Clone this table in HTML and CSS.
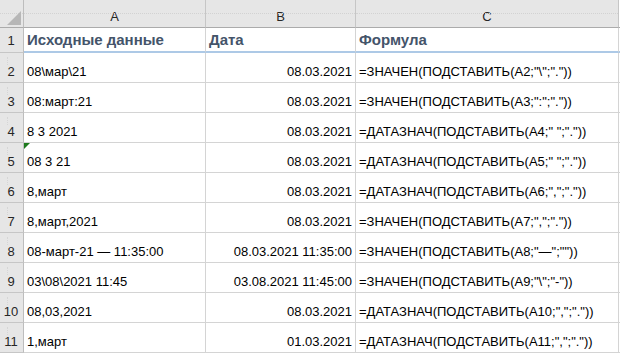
FILE: index.html
```html
<!DOCTYPE html>
<html lang="ru">
<head>
<meta charset="utf-8">
<link rel="stylesheet" href="styles.css">
</head>
<body>
<div class="sheet">
  <div class="ch corner"><span class="tri"></span></div>
  <div class="ch">A</div>
  <div class="ch">B</div>
  <div class="ch">C</div>
  <div class="blank"></div>

  <div class="rh r1">1</div>
  <div class="c r1 head">Исходные данные</div>
  <div class="c r1 head">Дата</div>
  <div class="c r1 head">Формула</div>
  <div class="c r1 edge"></div>

  <div class="rh">2</div>
  <div class="c">08\мар\21</div>
  <div class="c num">08.03.2021</div>
  <div class="c">=ЗНАЧЕН(ПОДСТАВИТЬ(A2;"\";"."))</div>
  <div class="c edge"></div>

  <div class="rh">3</div>
  <div class="c">08:март:21</div>
  <div class="c num">08.03.2021</div>
  <div class="c">=ЗНАЧЕН(ПОДСТАВИТЬ(A3;":";"."))</div>
  <div class="c edge"></div>

  <div class="rh">4</div>
  <div class="c">8 3 2021</div>
  <div class="c num">08.03.2021</div>
  <div class="c">=ДАТАЗНАЧ(ПОДСТАВИТЬ(A4;" ";"."))</div>
  <div class="c edge"></div>

  <div class="rh">5</div>
  <div class="c flag">08 3 21</div>
  <div class="c num">08.03.2021</div>
  <div class="c">=ДАТАЗНАЧ(ПОДСТАВИТЬ(A5;" ";"."))</div>
  <div class="c edge"></div>

  <div class="rh">6</div>
  <div class="c">8,март</div>
  <div class="c num">08.03.2021</div>
  <div class="c">=ДАТАЗНАЧ(ПОДСТАВИТЬ(A6;",";"."))</div>
  <div class="c edge"></div>

  <div class="rh">7</div>
  <div class="c">8,март,2021</div>
  <div class="c num">08.03.2021</div>
  <div class="c">=ЗНАЧЕН(ПОДСТАВИТЬ(A7;",";"."))</div>
  <div class="c edge"></div>

  <div class="rh">8</div>
  <div class="c">08-март-21 — 11:35:00</div>
  <div class="c num">08.03.2021 11:35:00</div>
  <div class="c">=ЗНАЧЕН(ПОДСТАВИТЬ(A8;"—";""))</div>
  <div class="c edge"></div>

  <div class="rh">9</div>
  <div class="c">03\08\2021 11:45</div>
  <div class="c num">03.08.2021 11:45:00</div>
  <div class="c">=ЗНАЧЕН(ПОДСТАВИТЬ(A9;"\";"-"))</div>
  <div class="c edge"></div>

  <div class="rh">10</div>
  <div class="c">08,03,2021</div>
  <div class="c num">08.03.2021</div>
  <div class="c">=ДАТАЗНАЧ(ПОДСТАВИТЬ(A10;",";"."))</div>
  <div class="c edge"></div>

  <div class="rh">11</div>
  <div class="c">1,март</div>
  <div class="c num">01.03.2021</div>
  <div class="c">=ДАТАЗНАЧ(ПОДСТАВИТЬ(A11;",";"."))</div>
  <div class="c edge"></div>
</div>
</body>
</html>
```

FILE: styles.css
```css
html, body {
  margin: 0;
  padding: 0;
  background: #ffffff;
  overflow: hidden;
}

.sheet {
  display: grid;
  grid-template-columns: 24px 182px 150px 263px 1px;
  grid-template-rows: 28px 25px repeat(10, 30px);
  width: 620px;
  height: 353px;
  overflow: hidden;
  font-family: "Liberation Sans", Arial, sans-serif;
  font-size: 13px;
  color: #000;
}

.ch {
  position: relative;
  background: #e6e6e6;
  border-right: 1px solid #c6c6c6;
  border-bottom: 1px solid #ababab;
  box-sizing: border-box;
  display: flex;
  align-items: flex-end;
  justify-content: center;
  padding-bottom: 3px;
  line-height: 15px;
  color: #262626;
}

.ch::before {
  content: "";
  position: absolute;
  left: 0;
  right: 0;
  top: 13px;
  border-top: 1px dotted #d2d2d2;
}

.ch.corner {
  border-right: 1px solid #bdbdbd;
}

.tri {
  position: absolute;
  right: 2px;
  bottom: 2px;
  width: 0;
  height: 0;
  border-left: 14px solid transparent;
  border-bottom: 14px solid #b7b7b7;
}

.blank {
  border-bottom: 1px solid #ababab;
}

.rh {
  position: relative;
  background: #e6e6e6;
  border-right: 1px solid #bdbdbd;
  border-bottom: 1px solid #c6c6c6;
  box-sizing: border-box;
  display: flex;
  align-items: flex-end;
  justify-content: center;
  padding-bottom: 3px;
  padding-right: 1px;
  line-height: 15px;
  color: #262626;
}

.rh::before {
  content: "";
  position: absolute;
  left: 7px;
  top: 4px;
  height: 8px;
  border-left: 1px dotted #d6d6d6;
}

.rh.r1 {
  align-items: center;
  padding-bottom: 0;
}

.rh.r1::before {
  display: none;
}

.c {
  position: relative;
  border-right: 1px solid #d4d4d4;
  border-bottom: 1px solid #d4d4d4;
  box-sizing: border-box;
  display: flex;
  align-items: flex-end;
  padding: 0 3px 3px 3px;
  line-height: 15px;
  white-space: nowrap;
}

.c.edge {
  border-right: none;
  padding: 0;
}

.c.r1 {
  border-bottom: 2px solid #adc9e6;
  align-items: center;
  padding-bottom: 0;
}

.head {
  font-size: 15px;
  font-weight: bold;
  color: #44546a;
}

.num {
  justify-content: flex-end;
}

.flag::after {
  content: "";
  position: absolute;
  left: 0;
  top: 0;
  width: 0;
  height: 0;
  border-top: 6px solid #1e7b1e;
  border-right: 6px solid transparent;
}
```
